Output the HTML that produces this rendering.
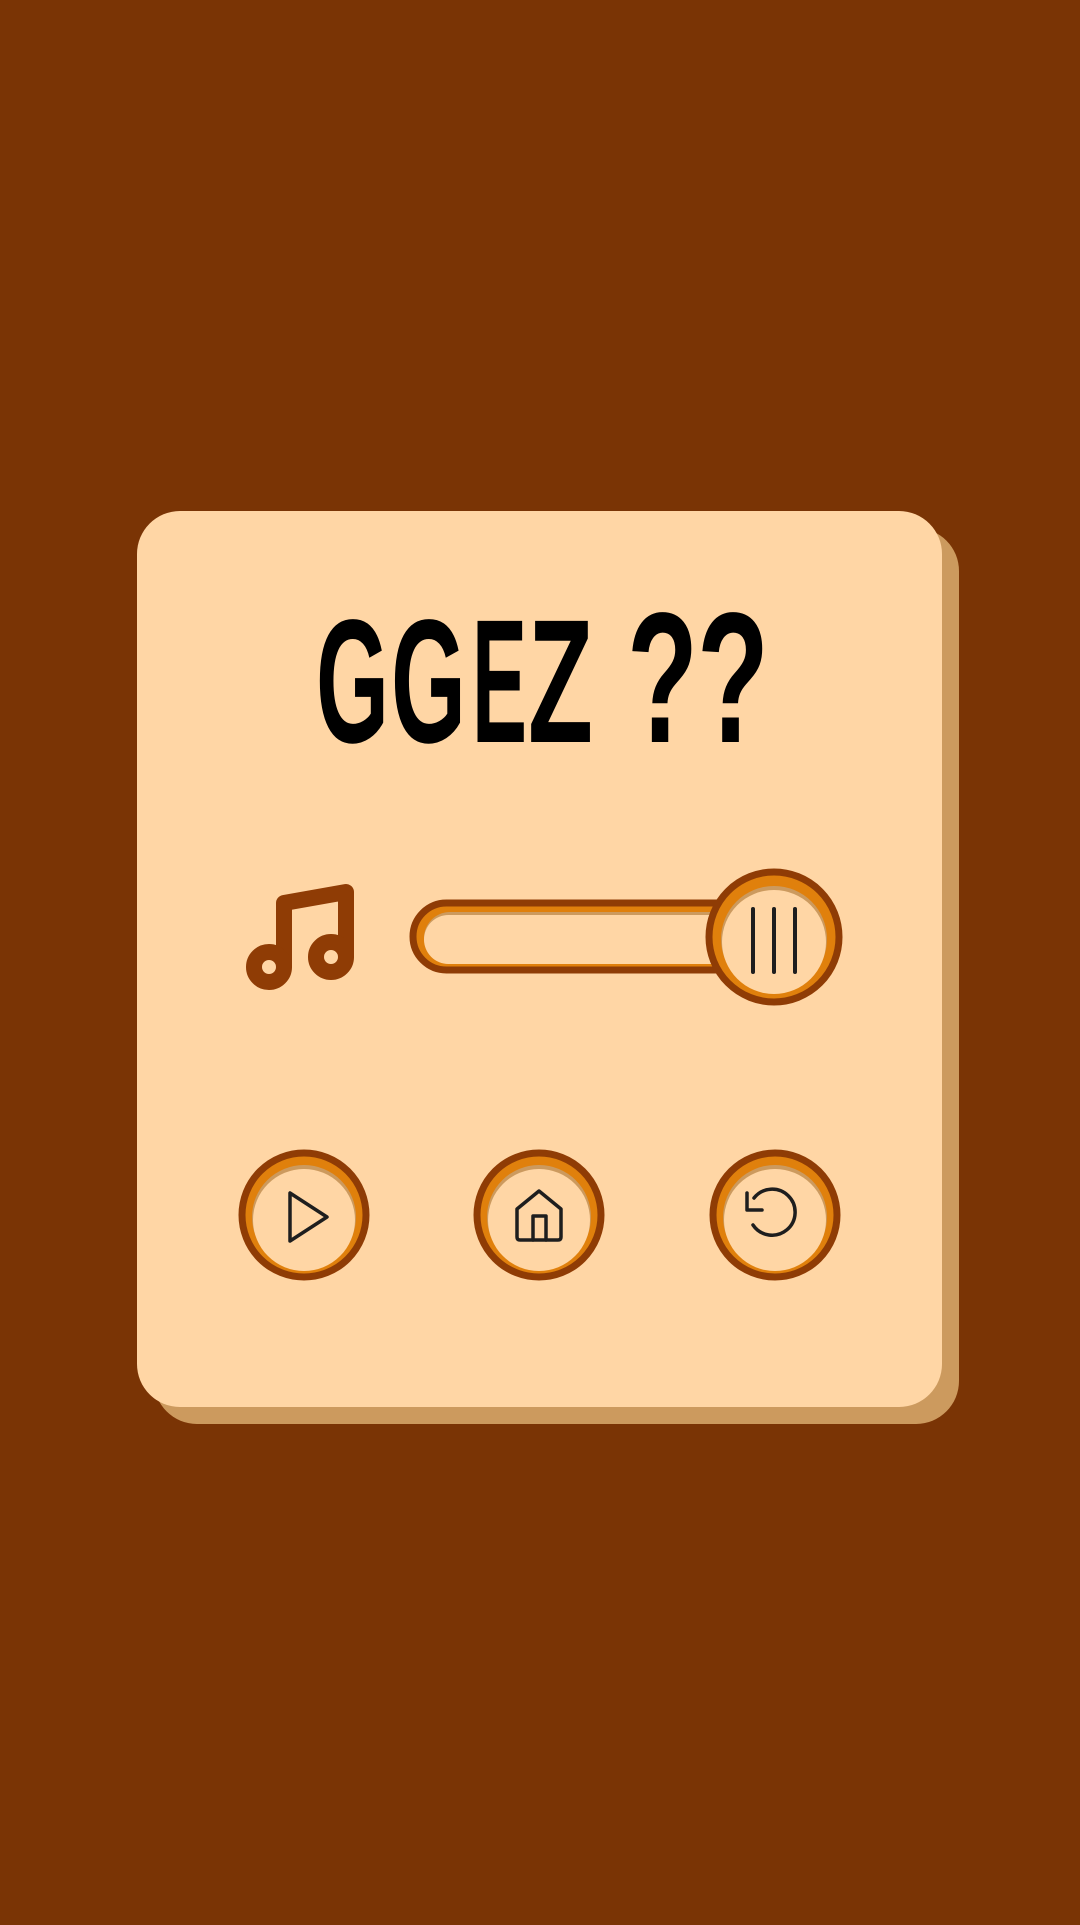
<!DOCTYPE html>
<html><head><meta charset="utf-8"><style>
html,body{margin:0;padding:0;background:#7A3405;}
body{width:1080px;height:1920px;overflow:hidden;}
</style></head><body>
<svg width="1080" height="1920" viewBox="0 0 1080 1920" xmlns="http://www.w3.org/2000/svg">
<rect width="1080" height="1920" fill="#7A3405"/>
<rect x="154" y="528" width="805" height="896" rx="43" fill="#CC9A5E"/>
<rect x="137" y="511" width="805" height="896" rx="43" fill="#FFD6A5"/>
<g font-family="'Liberation Sans Narrow','Liberation Sans',sans-serif" font-weight="bold" font-size="176" fill="#000">
<text x="316" y="742" textLength="73" lengthAdjust="spacingAndGlyphs">G</text>
<text x="391" y="742" textLength="75" lengthAdjust="spacingAndGlyphs">G</text>
<text x="472" y="742" textLength="55" lengthAdjust="spacingAndGlyphs">E</text>
<text x="528" y="742" textLength="65" lengthAdjust="spacingAndGlyphs">Z</text>
<text x="627" y="742" textLength="71" lengthAdjust="spacingAndGlyphs" font-size="186">?</text>
<text x="697" y="742" textLength="72" lengthAdjust="spacingAndGlyphs" font-size="186">?</text>
</g>
<!-- music note -->
<g stroke="#8F3C05" stroke-width="16" fill="none" stroke-linejoin="round" stroke-linecap="round">
<path d="M284 966 V903 L346 892 V956"/>
<circle cx="269" cy="967" r="15"/>
<circle cx="331" cy="957" r="15"/>
</g>
<!-- slider track -->
<rect x="413" y="903" width="360" height="67" rx="33.5" fill="#E0800C" stroke="#8F3C05" stroke-width="7"/>
<rect x="424" y="912" width="360" height="52" rx="26" fill="#CC9A5E"/>
<rect x="424" y="915" width="360" height="49" rx="24.5" fill="#FFD6A5"/>
<!-- knob -->
<circle cx="774" cy="937" r="65" fill="#E0800C" stroke="#8F3C05" stroke-width="7"/>
<circle cx="774" cy="939" r="53" fill="#CC9A5E"/>
<circle cx="774" cy="942" r="52" fill="#FFD6A5"/>
<g stroke="#1E1E1E" stroke-width="4" stroke-linecap="round">
<path d="M753 909V972M774 909V972M795 909V972"/>
</g>
<!-- buttons -->
<g>
<circle cx="304" cy="1215" r="62" fill="#E0800C" stroke="#8F3C05" stroke-width="7"/>
<circle cx="304" cy="1217" r="52" fill="#CC9A5E"/>
<circle cx="304" cy="1220" r="51" fill="#FFD6A5"/>
<circle cx="539" cy="1215" r="62" fill="#E0800C" stroke="#8F3C05" stroke-width="7"/>
<circle cx="539" cy="1217" r="52" fill="#CC9A5E"/>
<circle cx="539" cy="1220" r="51" fill="#FFD6A5"/>
<circle cx="775" cy="1215" r="62" fill="#E0800C" stroke="#8F3C05" stroke-width="7"/>
<circle cx="775" cy="1217" r="52" fill="#CC9A5E"/>
<circle cx="775" cy="1220" r="51" fill="#FFD6A5"/>
</g>
<g stroke="#1E1E1E" stroke-width="3.5" fill="none" stroke-linejoin="round" stroke-linecap="round">
<path d="M290 1193 V1241 L327 1217 Z"/>
<path d="M517 1209 L539 1191 L561 1209 V1237 Q561 1240 558 1240 H520 Q517 1240 517 1237 Z"/>
<path d="M533 1240 V1216 H546 V1240"/>
<path d="M754 1198 A23 23 0 1 1 753 1225"/>
<path d="M747 1193 V1210 H762"/>
</g>
</svg>
</body></html>
